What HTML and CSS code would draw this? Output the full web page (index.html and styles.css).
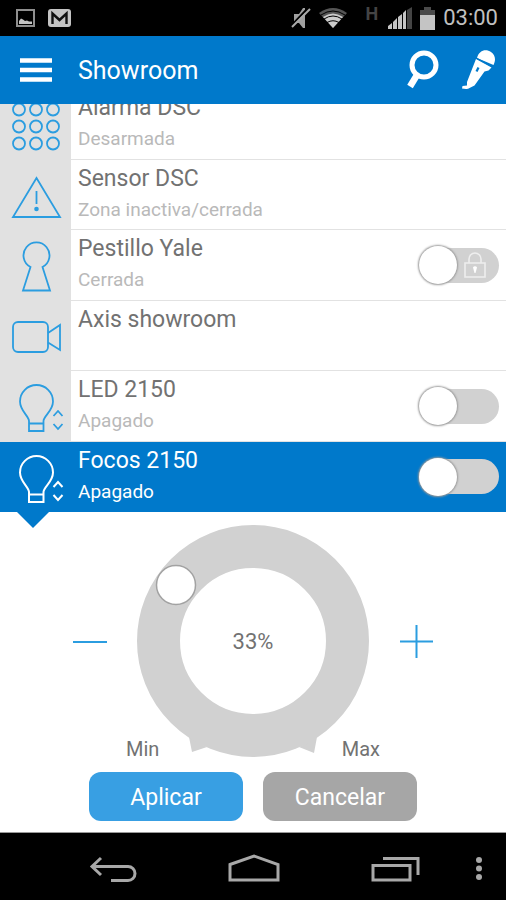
FILE: index.html
```html
<!DOCTYPE html>
<html lang="es">
<head>
<meta charset="utf-8">
<meta name="viewport" content="width=device-width, initial-scale=1">
<title>Showroom</title>
<link rel="stylesheet" href="styles.css">
</head>
<body>
<div class="status">
  <div class="status-group">
    <svg width="19" height="18" viewBox="0 0 19 18"><rect x="1" y="1" width="17" height="16" fill="none" stroke="#8f8f8f" stroke-width="2"/><path d="M3 15V12l2-2.500 2 1 2 1.500 2-.5 2 1h3v2.500z" fill="#c4c4c4"/></svg>
    <svg width="23" height="18" viewBox="0 0 23 18"><rect width="23" height="18" rx="3" fill="#c4c4c4"/><path d="M4.500 15V4.500L11.500 11l7-6.500V15" fill="none" stroke="#111" stroke-width="2.400"/></svg>
  </div>
  <div class="status-group status-right">
    <svg class="mute" width="20" height="22" viewBox="0 0 20 22"><path d="M3 7h5l4-6h2v20h-2l-4-5H3z" fill="#a0a0a0"/><path d="M1 18L17 1" stroke="#000" stroke-width="2"/><path d="M1 20L19 2" stroke="#aaa" stroke-width="2"/></svg>
    <svg class="wifi" width="28" height="20" viewBox="0 0 28 20"><path d="M0 5Q14-5 28 5L14 20z" fill="#555"/><path d="M4 9Q14 2 24 9L14 20z" fill="#ccc"/><path d="M2 7Q14-1 26 7M5 11Q14 5 23 11M8 14.500Q14 11 20 14.500" fill="none" stroke="#000" stroke-width="1"/></svg>
    <span class="network">H</span>
    <svg class="signal" width="24" height="22" viewBox="0 0 24 22"><path d="M0 22v-3l4-3v6zM5 22v-7l4-4v11zM10 22V10l4-3v15zM15 22V6l3-3v19z" fill="#c4c4c4"/><path d="M19 22V3l5-3v22z" fill="#444"/></svg>
    <svg class="battery" width="15" height="23" viewBox="0 0 15 23"><path d="M0 3h4V0h7v3h4v5H0z" fill="#4a4a4a"/><path d="M0 8h15v15H0z" fill="#c4c4c4"/></svg>
    <time class="clock">03:00</time>
  </div>
</div>

<header class="topbar">
  <button class="icon-button menu" aria-label="Menú"><svg width="32" height="24" viewBox="0 0 32 24"><path d="M0 2.500h32M0 12h32M0 21.500h32" stroke="#fff" stroke-width="4.600"/></svg></button>
  <h1>Showroom</h1>
  <button class="icon-button" aria-label="Buscar"><svg width="34" height="40" viewBox="0 0 34 40"><circle cx="18" cy="15" r="12" fill="none" stroke="#fff" stroke-width="5"/><path d="M11 25L4 36.500" stroke="#fff" stroke-width="6.500"/></svg></button>
  <button class="icon-button" aria-label="Voz"><svg width="34" height="40" viewBox="0 0 34 40"><path d="M16 8C18 0 25-1.500 30 2c4.500 3 5 8 2.500 13z" fill="#fff"/><path d="M15 9l15.500 8.500-3 3-4 1-10 14-5 2.500c-2 1.500-5 1-7.500.5l.5-2.500 4.500-.5V32z" fill="#fff"/><path d="M15 8l17 9" stroke="#0079cb" stroke-width="1.200"/><path d="M17.500 17.500l-2 4" stroke="#0079cb" stroke-width="2.200"/></svg></button>
</header>

<main>
  <div class="viewport">
  <ul class="devices">
    <li class="device">
      <div class="device-icon"><svg width="70" height="70" viewBox="0 0 70 70"><circle cx="19" cy="20.500" r="6"/><circle cx="36" cy="20.500" r="6"/><circle cx="53" cy="20.500" r="6"/><circle cx="19" cy="37.500" r="6"/><circle cx="36" cy="37.500" r="6"/><circle cx="53" cy="37.500" r="6"/><circle cx="19" cy="54.500" r="6"/><circle cx="36" cy="54.500" r="6"/><circle cx="53" cy="54.500" r="6"/></svg></div>
      <div class="device-text"><h2>Alarma DSC</h2><p>Desarmada</p></div>
    </li>
    <li class="device">
      <div class="device-icon"><svg width="70" height="70" viewBox="0 0 70 70"><path d="M36.500 18L60 57H13zM36.500 31v13"/><circle class="dot" cx="36.500" cy="49" r="2.300"/></svg></div>
      <div class="device-text"><h2>Sensor DSC</h2><p>Zona inactiva/cerrada</p></div>
    </li>
    <li class="device">
      <div class="device-icon"><svg width="70" height="70" viewBox="0 0 70 70"><path d="M30.500 37A13 13 0 1 1 42.500 37L50 60.500H23z"/></svg></div>
      <div class="device-text"><h2>Pestillo Yale</h2><p>Cerrada</p></div>
      <label class="toggle"><input type="checkbox" role="switch" aria-label="Pestillo Yale">
        <svg class="lock" width="22" height="26" viewBox="0 0 22 26"><path d="M1 11h20v14H1zM5 11V7a6 6 0 0 1 12 0v4" fill="none" stroke="#eee" stroke-width="1.600"/><path d="M9 15.500a2.200 2.200 0 0 1 4 0L11.500 21h-1z" fill="#fff"/></svg>
      </label>
    </li>
    <li class="device">
      <div class="device-icon"><svg width="70" height="70" viewBox="0 0 70 70"><rect x="13" y="21" width="35" height="30" rx="5"/><path d="M48 32l12-8v25L48 41.500"/></svg></div>
      <div class="device-text"><h2>Axis showroom</h2></div>
    </li>
    <li class="device">
      <div class="device-icon"><svg width="70" height="70" viewBox="0 0 70 70"><path d="M29 60V50C29 45 20 40 20 30.500a16.500 16.500 0 0 1 33 0C53 40 43.500 45 43.500 50V60zM29 52.500h14.500M53.500 45l4.500-5 4.500 5M53.500 53l4.500 5 4.500-5"/></svg></div>
      <div class="device-text"><h2>LED 2150</h2><p>Apagado</p></div>
      <label class="toggle"><input type="checkbox" role="switch" aria-label="LED 2150"></label>
    </li>
    <li class="device selected">
      <div class="device-icon"><svg width="70" height="70" viewBox="0 0 70 70"><path d="M29 60V50C29 45 20 40 20 30.500a16.500 16.500 0 0 1 33 0C53 40 43.500 45 43.500 50V60zM29 52.500h14.500M53.500 45l4.500-5 4.500 5M53.500 53l4.500 5 4.500-5"/></svg></div>
      <div class="device-text"><h2>Focos 2150</h2><p>Apagado</p></div>
      <label class="toggle"><input type="checkbox" role="switch" aria-label="Focos 2150"></label>
    </li>
  </ul>
  </div>

  <section class="dimmer" aria-label="Intensidad">
    <div class="dial-row">
      <button class="step" aria-label="Menos"><svg width="34" height="34" viewBox="0 0 34 34"><path d="M0 18h34"/></svg></button>
      <div class="dial">
        <svg width="232" height="232" viewBox="0 0 232 232">
          <path d="M52 212l3 15 15-5zM180 212l-3 16-15-6z" fill="#d1d1d1"/>
          <circle cx="116" cy="116" r="94.500" fill="none" stroke="#d1d1d1" stroke-width="43"/>
          <circle cx="39" cy="60" r="19.500" fill="#fff" stroke="#a2a2a2" stroke-width="1.500"/>
        </svg>
        <input type="range" min="0" max="100" value="33" aria-label="Intensidad">
        <output>33%</output>
      </div>
      <button class="step" aria-label="Más"><svg width="34" height="34" viewBox="0 0 34 34"><path d="M1 17.500h33M17.500 1v33"/></svg></button>
    </div>
    <div class="limits"><span>Min</span><span>Max</span></div>
    <div class="actions">
      <button class="apply">Aplicar</button>
      <button class="cancel">Cancelar</button>
    </div>
  </section>
</main>

<nav class="navbar">
  <button aria-label="Atrás"><svg width="48" height="28" viewBox="0 0 48 28"><path d="M12 5L3 13.500L12 22M3 13.500H39a7 7 0 0 1 0 14H22"/></svg></button>
  <button aria-label="Inicio"><svg width="52" height="28" viewBox="0 0 52 28"><path d="M2 11.500L26 3l24 8.500V27H2z"/></svg></button>
  <button aria-label="Recientes"><svg width="50" height="28" viewBox="0 0 50 28"><path d="M3 12.500h37V27H3zM13 5.500h35V22"/></svg></button>
  <button class="more" aria-label="Más opciones"><svg width="8" height="28" viewBox="0 0 8 28"><circle cx="4" cy="7" r="3"/><circle cx="4" cy="15.500" r="3"/><circle cx="4" cy="24" r="3"/></svg></button>
</nav>
</body>
</html>
```
FILE: styles.css
```css
* { box-sizing: border-box; }

body {
  margin: 0;
  min-height: 100vh;
  display: flex;
  flex-direction: column;
  background: #fff;
  color: #727272;
  font-family: Roboto, "Liberation Sans", sans-serif;
}

h1, h2, p, ul { margin: 0; padding: 0; font-weight: 400; }
button { padding: 0; border: 0; background: none; font: inherit; cursor: pointer; }
svg { display: block; flex: none; }

.status {
  height: 36px;
  padding: 0 8px 0 16px;
  display: flex;
  align-items: center;
  justify-content: space-between;
  background: #000;
}
.status-group { display: flex; align-items: center; gap: 13px; }
.status-right { gap: 8px; }
.network { margin: 0 2px 8px 10px; font-size: 18px; line-height: 20px; font-weight: 700; color: #444; }
.clock { font-size: 22px; line-height: 28px; color: #c0c0c0; }

.topbar {
  height: 68px;
  padding: 0 11px 0 20px;
  display: flex;
  align-items: center;
  gap: 21px;
  background: #0079cb;
  color: #fff;
}
.topbar h1 { flex: 1; padding: 2px 0 0 5px; font-size: 25px; line-height: 32px; }

main { flex: 1; display: flex; flex-direction: column; }

/* The list is scrolled slightly under the top bar. */
.viewport { overflow: hidden; }
.devices {
  height: 423px;
  margin-top: -15px;
  display: flex;
  flex-direction: column;
  list-style: none;
}
.device { flex: 1; display: flex; padding-right: 7px; background: linear-gradient(#e2e2e2, #e2e2e2) bottom / 100% 1px no-repeat; }
.device-icon { width: 71px; background: #e1e1e1; }
.device-icon svg { fill: none; stroke: #2b9de0; stroke-width: 1.8; }
.device-icon .dot { fill: #2b9de0; stroke: none; }
.device-text { flex: 1; padding: 5px 0 0 7px; }
.device-text h2 { font-size: 23px; line-height: 28px; }
.device-text p { padding-top: 5px; font-size: 19px; line-height: 24px; color: #b9b9b9; }

.selected { background: #0079cb; }
.selected .device-icon { background: none; }
.selected .device-icon svg { stroke: #fff; stroke-width: 2; }
.selected h2, .selected p { color: #fff; }

.toggle { position: relative; align-self: center; }
.toggle input {
  appearance: none;
  display: flex;
  align-items: center;
  width: 80px;
  height: 35px;
  margin: 0;
  border-radius: 18px;
  background: #d1d1d1;
}
.toggle input::before {
  content: "";
  width: 38px;
  height: 38px;
  flex: none;
  border-radius: 50%;
  background: #fff;
  box-shadow: 0 0 2px 1px #999;
}
.toggle input:checked::before { margin-left: auto; }
.lock { position: absolute; right: 13px; top: 4px; pointer-events: none; }

.dimmer {
  position: relative;
  flex: 1;
  padding: 13px 0 12px;
  display: flex;
  flex-direction: column;
  align-items: center;
}
.dimmer::before {
  content: "";
  position: absolute;
  top: 0;
  left: 17px;
  border: 16px solid transparent;
  border-top-color: #0079cb;
  border-bottom: 0;
}
.dial-row { display: flex; align-items: center; gap: 30px; }
.step path { stroke: #2b9de0; stroke-width: 2; }
.dial { display: grid; place-items: center; }
.dial > * { grid-area: 1 / 1; }
.dial input { width: 100%; height: 100%; margin: 0; opacity: 0; }
.dial output { padding-top: 2px; font-size: 22px; line-height: 28px; pointer-events: none; }
.limits {
  width: 254px;
  margin-top: -20px;
  display: flex;
  justify-content: space-between;
  font-size: 20px;
  line-height: 24px;
}
.actions { display: flex; gap: 20px; margin-top: 11px; }
.actions button { width: 154px; height: 49px; padding-top: 2px; border-radius: 12px; color: #fff; font-size: 23px; }
.actions .apply { background: #389fe3; }
.actions .cancel { background: #a6a6a6; }

.navbar {
  height: 67px;
  padding: 0 13px 0 42px;
  display: flex;
  background: #000;
  box-shadow: 0 -1px #999;
}
.navbar button { flex: 1; display: grid; place-items: center; }
.navbar .more { flex: 0 0 28px; }
.navbar svg { fill: none; stroke: #a8a8a8; stroke-width: 3; overflow: visible; }
.navbar .more svg { fill: #a8a8a8; stroke: none; }
```
